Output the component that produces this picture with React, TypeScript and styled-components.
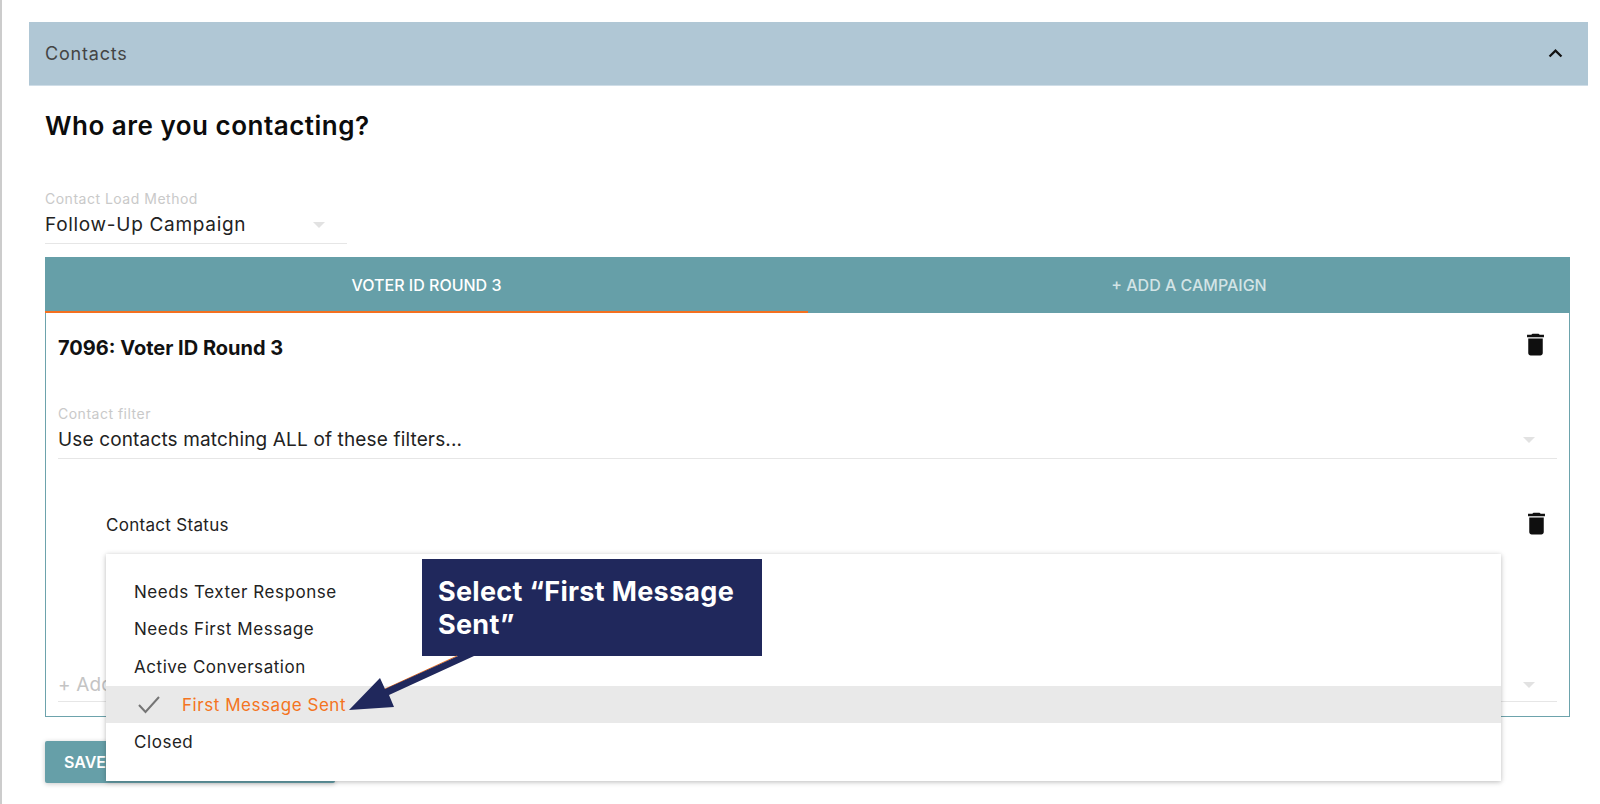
import styled, { createGlobalStyle } from 'styled-components'

const GlobalStyle = createGlobalStyle`
  html, body {
    margin: 0;
    height: 804px;
    overflow: hidden;
    background: #fff;
  }
  body {
    font-family: Inter, "Noto Sans", sans-serif;
  }
`

const Page = styled.div`
  position: relative;
  box-sizing: border-box;
  height: 804px;
  padding: 22px 12px 0 27px;
  border-left: 2px solid #ccc;
  overflow: hidden;
`

const Header = styled.header`
  display: flex;
  align-items: center;
  justify-content: space-between;
  height: 63px;
  padding: 0 19px 0 16px;
  background: #b0c7d5;
  border-bottom: 1px solid #cfdde7;
  color: #444;
  font-size: 18px;
  letter-spacing: 0.8px;
`

const Content = styled.div`
  padding: 0 18px 0 16px;
`

const Title = styled.h1`
  margin: 25px 0 0;
  height: 30px;
  font-size: 26px;
  line-height: 30px;
  font-weight: 600;
  color: #0c0c0c;
  letter-spacing: 0.5px;
`

const FieldLabel = styled.div`
  font-size: 14px;
  line-height: 18px;
  color: #c9c9c9;
  letter-spacing: 0.5px;
`

const SelectRow = styled.div<{ $width?: string; $spacing?: string }>`
  display: flex;
  align-items: center;
  justify-content: space-between;
  box-sizing: border-box;
  width: ${(p) => p.$width ?? '100%'};
  height: 36px;
  padding: 0 22px 2px 0;
  border-bottom: 1px solid #e6e6e6;
  color: #222;
  font-size: 19px;
  letter-spacing: ${(p) => p.$spacing ?? '0.15px'};
`

const LoadMethod = styled.div`
  margin-top: 49px;
`

const Tabs = styled.div`
  display: grid;
  grid-template-columns: 763px 1fr;
  height: 56px;
  margin-top: 13px;
  background: #669fa8;
`

const Tab = styled.div<{ $active?: boolean }>`
  display: flex;
  align-items: center;
  justify-content: center;
  box-sizing: border-box;
  padding-top: 2px;
  border-bottom: 2px solid ${(p) => (p.$active ? '#f4701f' : 'transparent')};
  color: ${(p) => (p.$active ? '#fff' : 'rgba(255, 255, 255, 0.72)')};
  font-size: 16px;
  font-weight: 500;
`

const Panel = styled.section`
  box-sizing: border-box;
  height: 404px;
  padding: 0 12px;
  border: 1px solid #6da3ac;
  border-top: 0;
`

const PanelHead = styled.div`
  display: flex;
  align-items: center;
  justify-content: space-between;
  height: 66px;
  padding-right: 7px;
  color: #111;

  svg {
    margin-bottom: 4px;
  }
`

const PanelTitle = styled.span`
  margin-top: 4px;
  font-size: 20px;
  font-weight: 700;
`

const FilterField = styled.div`
  margin-top: 26px;
`

const StatusBlock = styled.div`
  position: relative;
  margin-top: 39px;
  padding-left: 48px;
`

const StatusHead = styled.div`
  display: flex;
  align-items: center;
  justify-content: space-between;
  height: 54px;
  padding-right: 6px;
  color: #222;
  font-size: 17px;
  letter-spacing: 0.3px;

  svg {
    margin-bottom: 4px;
  }
`

const AddRow = styled(SelectRow)`
  margin-top: 114px;
  padding-top: 4px;
  color: #c4c4c4;
`

const Menu = styled.ul`
  position: absolute;
  left: 48px;
  top: 56px;
  width: 1395px;
  height: 227px;
  box-sizing: border-box;
  margin: 0;
  padding: 19px 0 0;
  list-style: none;
  background: #fff;
  box-shadow: 0 1px 6px rgba(0, 0, 0, 0.16), 0 1px 4px rgba(0, 0, 0, 0.12);
`

const MenuItem = styled.li<{ $selected?: boolean }>`
  display: flex;
  align-items: center;
  gap: 19px;
  height: 37.6px;
  padding-left: ${(p) => (p.$selected ? '31px' : '28px')};
  background: ${(p) => (p.$selected ? '#e9e9e9' : 'transparent')};
  color: ${(p) => (p.$selected ? '#f47421' : '#222')};
  font-size: 17px;
  letter-spacing: 0.55px;
`

const SaveButton = styled.button`
  display: block;
  box-sizing: border-box;
  width: 290px;
  height: 42px;
  margin-top: 24px;
  padding: 0 0 0 19px;
  border: 0;
  border-radius: 2px;
  background: #669fa8;
  color: #fff;
  font: 600 16px Inter, sans-serif;
  text-align: left;
  box-shadow: 0 1px 5px rgba(0, 0, 0, 0.22);
`

const Callout = styled.div`
  position: absolute;
  left: 420px;
  top: 559px;
  box-sizing: border-box;
  width: 340px;
  height: 97px;
  padding: 16px 16px;
  background: #20285c;
  color: #fff;
  font-size: 27px;
  line-height: 33px;
  font-weight: 700;
  letter-spacing: 0.3px;
`

const Pointer = styled.svg`
  position: absolute;
  left: 336px;
  top: 650px;
`

const Caret = styled.svg`
  flex: none;
`

function DropCaret() {
  return (
    <Caret width="12" height="6" viewBox="0 0 12 6">
      <path d="M0 0h12L6 6z" fill="#e2e2e2" />
    </Caret>
  )
}

function TrashIcon() {
  return (
    <svg width="29" height="29" viewBox="0 0 24 24" fill="#0f0f0f">
      <path d="M6 19c0 1.1.9 2 2 2h8c1.1 0 2-.9 2-2V7H6v12zM19 4h-3.5l-1-1h-5l-1 1H5v2h14V4z" />
    </svg>
  )
}

export default function App() {
  return (
    <Page>
      <GlobalStyle />
      <Header>
        <span>Contacts</span>
        <svg width="27" height="27" viewBox="0 0 24 24" fill="#111">
          <path d="M12 8l-6 6 1.41 1.41L12 10.83l4.59 4.58L18 14z" />
        </svg>
      </Header>
      <Content>
        <Title>Who are you contacting?</Title>
        <LoadMethod>
          <FieldLabel>Contact Load Method</FieldLabel>
          <SelectRow $width="302px" $spacing="0.7px">
            Follow-Up Campaign
            <DropCaret />
          </SelectRow>
        </LoadMethod>
        <Tabs>
          <Tab $active>VOTER ID ROUND 3</Tab>
          <Tab>+ ADD A CAMPAIGN</Tab>
        </Tabs>
        <Panel>
          <PanelHead>
            <PanelTitle>7096: Voter ID Round 3</PanelTitle>
            <TrashIcon />
          </PanelHead>
          <FilterField>
            <FieldLabel>Contact filter</FieldLabel>
            <SelectRow>
              Use contacts matching ALL of these filters...
              <DropCaret />
            </SelectRow>
          </FilterField>
          <StatusBlock>
            <StatusHead>
              Contact Status
              <TrashIcon />
            </StatusHead>
            <Menu>
              <MenuItem>Needs Texter Response</MenuItem>
              <MenuItem>Needs First Message</MenuItem>
              <MenuItem>Active Conversation</MenuItem>
              <MenuItem $selected>
                <svg width="26" height="20" viewBox="0 0 26 20" fill="none" stroke="#757575" strokeWidth="2">
                  <path d="M2 10l6.5 7L22 2" />
                </svg>
                First Message Sent
              </MenuItem>
              <MenuItem>Closed</MenuItem>
            </Menu>
          </StatusBlock>
          <AddRow>
            + Add
            <DropCaret />
          </AddRow>
        </Panel>
        <SaveButton>SAVE</SaveButton>
      </Content>
      <Callout>
        Select “First Message Sent”
      </Callout>
      <Pointer width="140" height="66" viewBox="336 650 140 66">
        <path d="M455 656L383 689" stroke="#f47421" strokeWidth="1" fill="none" />
        <path d="M456 656h16l-85 39 5 12-45 3 31-32 5 11z" fill="#20285c" />
      </Pointer>
    </Page>
  )
}
